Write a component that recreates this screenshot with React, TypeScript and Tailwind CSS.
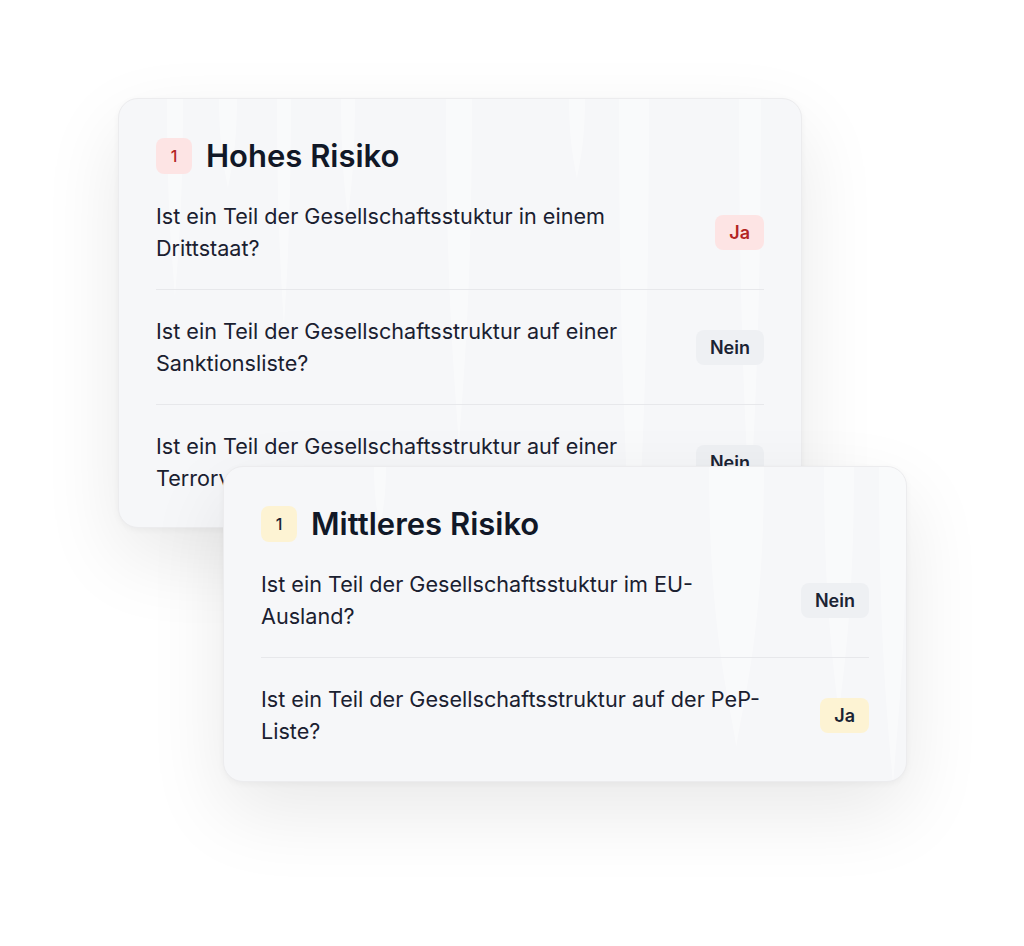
import React from 'react';

type Tone = 'red' | 'gray' | 'amber';

interface Question {
    text: string;
    answer: string;
    tone: Tone;
}

const answerStyles: Record<Tone, string> = {
    red: 'bg-[#fde4e4] text-[#b32424]',
    gray: 'bg-[#eef0f3] text-[#1b2333]',
    amber: 'bg-[#fdf3d3] text-[#1b2333]',
};

// faint "icicle" shapes in the card background
const Drips: React.FC<{ drips: [number, number, number][] }> = ({ drips }) => (
    <svg className="absolute inset-0 w-full h-full pointer-events-none" preserveAspectRatio="none">
        {drips.map(([x, w, h], i) => (
            <path
                key={i}
                d={`M${x} 0 L${x + w} 0 C${x + w} ${h * 0.6} ${x + w * 0.6} ${h * 0.85} ${x + w / 2} ${h} C${x + w * 0.4} ${h * 0.85} ${x} ${h * 0.6} ${x} 0 Z`}
                fill="#ffffff"
                opacity="0.4"
            />
        ))}
    </svg>
);

const QuestionRow: React.FC<{ q: Question; last?: boolean }> = ({ q, last }) => (
    <div className={`flex items-center justify-between gap-6 py-[25px] ${last ? '' : 'border-b border-[#e7e8eb]'}`}>
        <p className="max-w-[510px] text-[21.6px] leading-8 text-[#1a2030]">{q.text}</p>
        <span className={`shrink-0 rounded-lg px-[14px] h-[35px] flex items-center text-[18px] font-semibold ${answerStyles[q.answer === 'Ja' ? q.tone : 'gray']}`}>
            {q.answer}
        </span>
    </div>
);

interface RiskCardProps {
    title: string;
    count: number;
    badge: string;
    questions: Question[];
    drips: [number, number, number][];
    className?: string;
}

const RiskCard: React.FC<RiskCardProps> = ({ title, count, badge, questions, drips, className }) => (
    <div className={`relative w-[684px] overflow-hidden rounded-[20px] bg-[#f6f7f9] border border-[#ececee] shadow-[0_30px_80px_rgba(0,0,0,0.09),0_2px_6px_rgba(0,0,0,0.04)] ${className ?? ''}`}>
        <Drips drips={drips} />
        <div className="relative px-[37px] pt-[39px] pb-3">
            <div className="flex items-center gap-[14px] h-9">
                <span className={`w-9 h-9 rounded-lg flex items-center justify-center text-[16px] font-medium ${badge}`}>{count}</span>
                <h3 className="text-[31px] font-semibold text-[#111827]">{title}</h3>
            </div>
            <div className="mt-[1px]">
                {questions.map((q, i) => (
                    <QuestionRow key={i} q={q} last={i === questions.length - 1} />
                ))}
            </div>
        </div>
    </div>
);

const App: React.FC = () => {
    return (
        <div className="w-[1024px] h-[946px] bg-white overflow-hidden pt-[98px]" style={{ fontFamily: 'Inter, "Noto Sans", sans-serif' }}>
            <RiskCard
                className="ml-[118px] h-[430px]"
                title="Hohes Risiko"
                count={1}
                badge="bg-[#fde4e4] text-[#b32424]"
                drips={[[48, 16, 200], [100, 18, 90], [158, 14, 230], [222, 14, 120], [327, 26, 350], [450, 16, 80], [500, 30, 520], [620, 22, 420]]}
                questions={[
                    { text: 'Ist ein Teil der Gesellschaftsstuktur in einem Drittstaat?', answer: 'Ja', tone: 'red' },
                    { text: 'Ist ein Teil der Gesellschaftsstruktur auf einer Sanktionsliste?', answer: 'Nein', tone: 'gray' },
                    { text: 'Ist ein Teil der Gesellschaftsstruktur auf einer Terrorverdachtsliste?', answer: 'Nein', tone: 'gray' },
                ]}
            />
            <RiskCard
                className="relative z-10 ml-[223px] -mt-[62px] w-[683px] h-[316px]"
                title="Mittleres Risiko"
                count={1}
                badge="bg-[#fdf3d3] text-[#1b2333]"
                drips={[[150, 12, 60], [485, 55, 280], [600, 30, 250], [655, 28, 320]]}
                questions={[
                    { text: 'Ist ein Teil der Gesellschaftsstuktur im EU-Ausland?', answer: 'Nein', tone: 'gray' },
                    { text: 'Ist ein Teil der Gesellschaftsstruktur auf der PeP-Liste?', answer: 'Ja', tone: 'amber' },
                ]}
            />
        </div>
    );
};

export default App;
